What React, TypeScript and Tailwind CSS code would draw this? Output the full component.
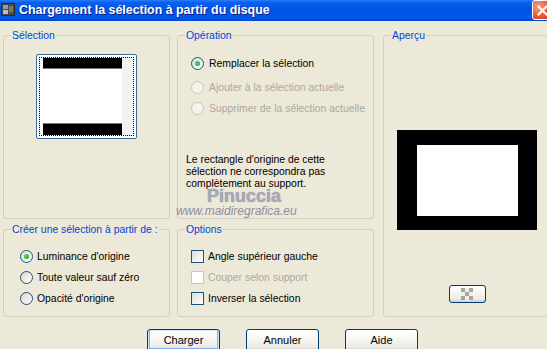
import clsx from 'clsx';

type Opt = { label: string; checked?: boolean; disabled?: boolean };

function Radio({ label, checked, disabled, gap = 'gap-[4px]' }: Opt & { gap?: string }) {
  return (
    <div className={clsx('flex items-center h-[13px]', gap)}>
      <span
        className={clsx(
          'w-[13px] h-[13px] rounded-full border flex items-center justify-center shrink-0',
          disabled
            ? 'border-[#cac8bb] bg-[#f4f3ec]'
            : 'border-[#1c5180] bg-[linear-gradient(135deg,#dcd9cd,#ffffff)]'
        )}
      >
        {checked && (
          <span className="w-[5px] h-[5px] rounded-full bg-[radial-gradient(circle_at_35%_35%,#55d551,#21a121)]" />
        )}
      </span>
      <span className={clsx('leading-[13px] whitespace-nowrap', disabled ? 'text-[#aca899]' : 'text-black')}>
        {label}
      </span>
    </div>
  );
}

function Check({ label, disabled }: Opt) {
  return (
    <div className="flex items-center gap-[4px] h-[13px]">
      <span
        className={clsx(
          'w-[13px] h-[13px] border shrink-0',
          disabled
            ? 'border-[#cac8bb] bg-white'
            : 'border-[#1c5180] bg-[linear-gradient(135deg,#dcdcd7,#ffffff)]'
        )}
      />
      <span className={clsx('leading-[13px] whitespace-nowrap', disabled ? 'text-[#aca899]' : 'text-black')}>
        {label}
      </span>
    </div>
  );
}

function Group({ title, className, children }: { title: string; className?: string; children: React.ReactNode }) {
  return (
    <fieldset className={clsx('border border-[#d0d0bf] rounded-[3px] m-0 p-0 min-w-0 h-full', className)}>
      <legend className="ml-[7px] px-[1px] text-[#0046d5] leading-[13px]">{title}</legend>
      {children}
    </fieldset>
  );
}

function XpButton({ label, def }: { label: string; def?: boolean }) {
  return (
    <button
      className={clsx(
        'w-[73px] h-[23px] rounded-[3px] border border-[#003c74] text-black text-[11px] bg-[linear-gradient(to_bottom,#ffffff_0%,#f5f4f0_50%,#ecebe5_80%,#d6d0c5_100%)]',
        def && 'shadow-[inset_0_0_0_1px_#cee7ff,inset_0_-1px_0_2px_#89adf4]'
      )}
    >
      {label}
    </button>
  );
}

export default function App() {
  return (
    <div className="relative w-[547px] h-[349px] overflow-hidden bg-[#ece9d8] font-['Liberation_Sans',Arial,sans-serif] text-[10.4px]">
      {/* title bar */}
      <div className="flex items-start h-[21px] bg-[linear-gradient(to_bottom,#2a7cf6_0%,#0a5fef_12%,#0054e3_50%,#0058ee_85%,#0046d0_100%)]">
        <svg width="14" height="13" viewBox="0 0 14 13" className="ml-[1px] mt-[3px] shrink-0">
          <rect x="0" y="0" width="14" height="13" fill="#2b2b2b" />
          <rect x="1" y="1" width="12" height="11" fill="#4a4a4a" />
          <rect x="2" y="2" width="5" height="4" fill="#9a9a9a" />
          <rect x="8" y="3" width="4" height="6" fill="#777" />
          <rect x="2" y="7" width="5" height="4" fill="#bdbdbd" />
        </svg>
        <span className="ml-[4px] mt-[2px] text-white font-bold text-[12.4px] leading-[16px] whitespace-nowrap [text-shadow:1px_1px_0_#0a1e8a]">
          Chargement la sélection à partir du disque
        </span>
        <div className="ml-auto mr-[-6px] w-[21px] h-[20px] shrink-0 rounded-[3px] border border-white bg-[radial-gradient(circle_at_30%_30%,#f2a18a,#e0542f_60%,#c8381a)] flex items-center justify-center">
          <svg width="11" height="11" viewBox="0 0 11 11">
            <path d="M1.5 1.5 L9.5 9.5 M9.5 1.5 L1.5 9.5" stroke="white" strokeWidth="2" strokeLinecap="square" />
          </svg>
        </div>
      </div>

      {/* groups */}
      <div className="grid grid-cols-[167px_197px_170px] grid-rows-[190px_94px] gap-x-[7px] gap-y-[4px] pl-[3px] pt-[8px]">
        <Group title="Sélection">
          <div className="mt-[12px] mx-auto w-[101px] h-[85px] border border-[#3b6a9a] rounded-[2px] bg-white p-[2px]">
            <div className="h-full border border-dotted border-black flex flex-col justify-between bg-[linear-gradient(to_right,#ffffff_88%,#f2f2f2_88%)]">
              <div className="ml-[3px] w-[79px] h-[11px] bg-black border-b border-[#7a7a7a]" />
              <div className="ml-[3px] w-[79px] h-[12px] bg-black border-t border-[#7a7a7a]" />
            </div>
          </div>
        </Group>

        <Group title="Opération">
          <div className="pl-[13px]">
            <div className="mt-[15px]">
              <Radio label="Remplacer la sélection" checked gap="gap-[5px]" />
            </div>
            <div className="mt-[11px]">
              <Radio label="Ajouter à la sélection actuelle" disabled gap="gap-[5px]" />
            </div>
            <div className="mt-[8px]">
              <Radio label="Supprimer de la sélection actuelle" disabled gap="gap-[5px]" />
            </div>
          </div>
          <p className="mt-[39px] pl-[8px] leading-[12px] text-black">
            Le rectangle d'origine de cette
            <br />
            sélection ne correspondra pas
            <br />
            complètement au support.
          </p>
        </Group>

        <Group title="Aperçu" className="row-span-2 ml-[2px]">
          <div className="mt-[88px] mx-auto w-[140px] h-[100px] bg-black pt-[15px] pl-[20px]">
            <div className="w-[101px] h-[71px] bg-white" />
          </div>
          <div className="mt-[55px] mx-auto w-[37px] h-[18px] rounded-[3px] border border-[#003c74] bg-[linear-gradient(to_bottom,#ffffff,#ecebe5_80%,#d6d0c5)] flex items-center justify-center">
            <div className="grid grid-cols-3 w-[12px] h-[12px]">
              <span className="bg-[#a9a79c]" />
              <span className="bg-[#eeeeee]" />
              <span className="bg-[#a9a79c]" />
              <span className="bg-[#eeeeee]" />
              <span className="bg-[#a9a79c]" />
              <span className="bg-[#eeeeee]" />
              <span className="bg-[#a9a79c]" />
              <span className="bg-[#eeeeee]" />
              <span className="bg-[#a9a79c]" />
            </div>
          </div>
        </Group>

        <Group title="Créer une sélection à partir de :">
          <div className="pl-[16px] pt-[14px] flex flex-col gap-[8px]">
            <Radio label="Luminance d'origine" checked />
            <Radio label="Toute valeur sauf zéro" />
            <Radio label="Opacité d'origine" />
          </div>
        </Group>

        <Group title="Options">
          <div className="pl-[13px] pt-[14px] flex flex-col gap-[8px]">
            <Check label="Angle supérieur gauche" />
            <Check label="Couper selon support" disabled />
            <Check label="Inverser la sélection" />
          </div>
        </Group>
      </div>

      {/* buttons */}
      <div className="flex gap-[26px] pl-[147px] mt-[12px]">
        <XpButton label="Charger" def />
        <XpButton label="Annuler" />
        <XpButton label="Aide" />
      </div>

      {/* watermark */}
      <div className="absolute left-[207px] top-[189px] text-[18px] leading-[15px] font-bold text-[#a8a8b8] [text-shadow:0_0_1px_#8888a0]">
        Pinuccia
      </div>
      <div className="absolute left-[176px] top-[205px] text-[12px] leading-[12px] italic text-[#8d8d9e]">
        www.maidiregrafica.eu
      </div>
    </div>
  );
}
